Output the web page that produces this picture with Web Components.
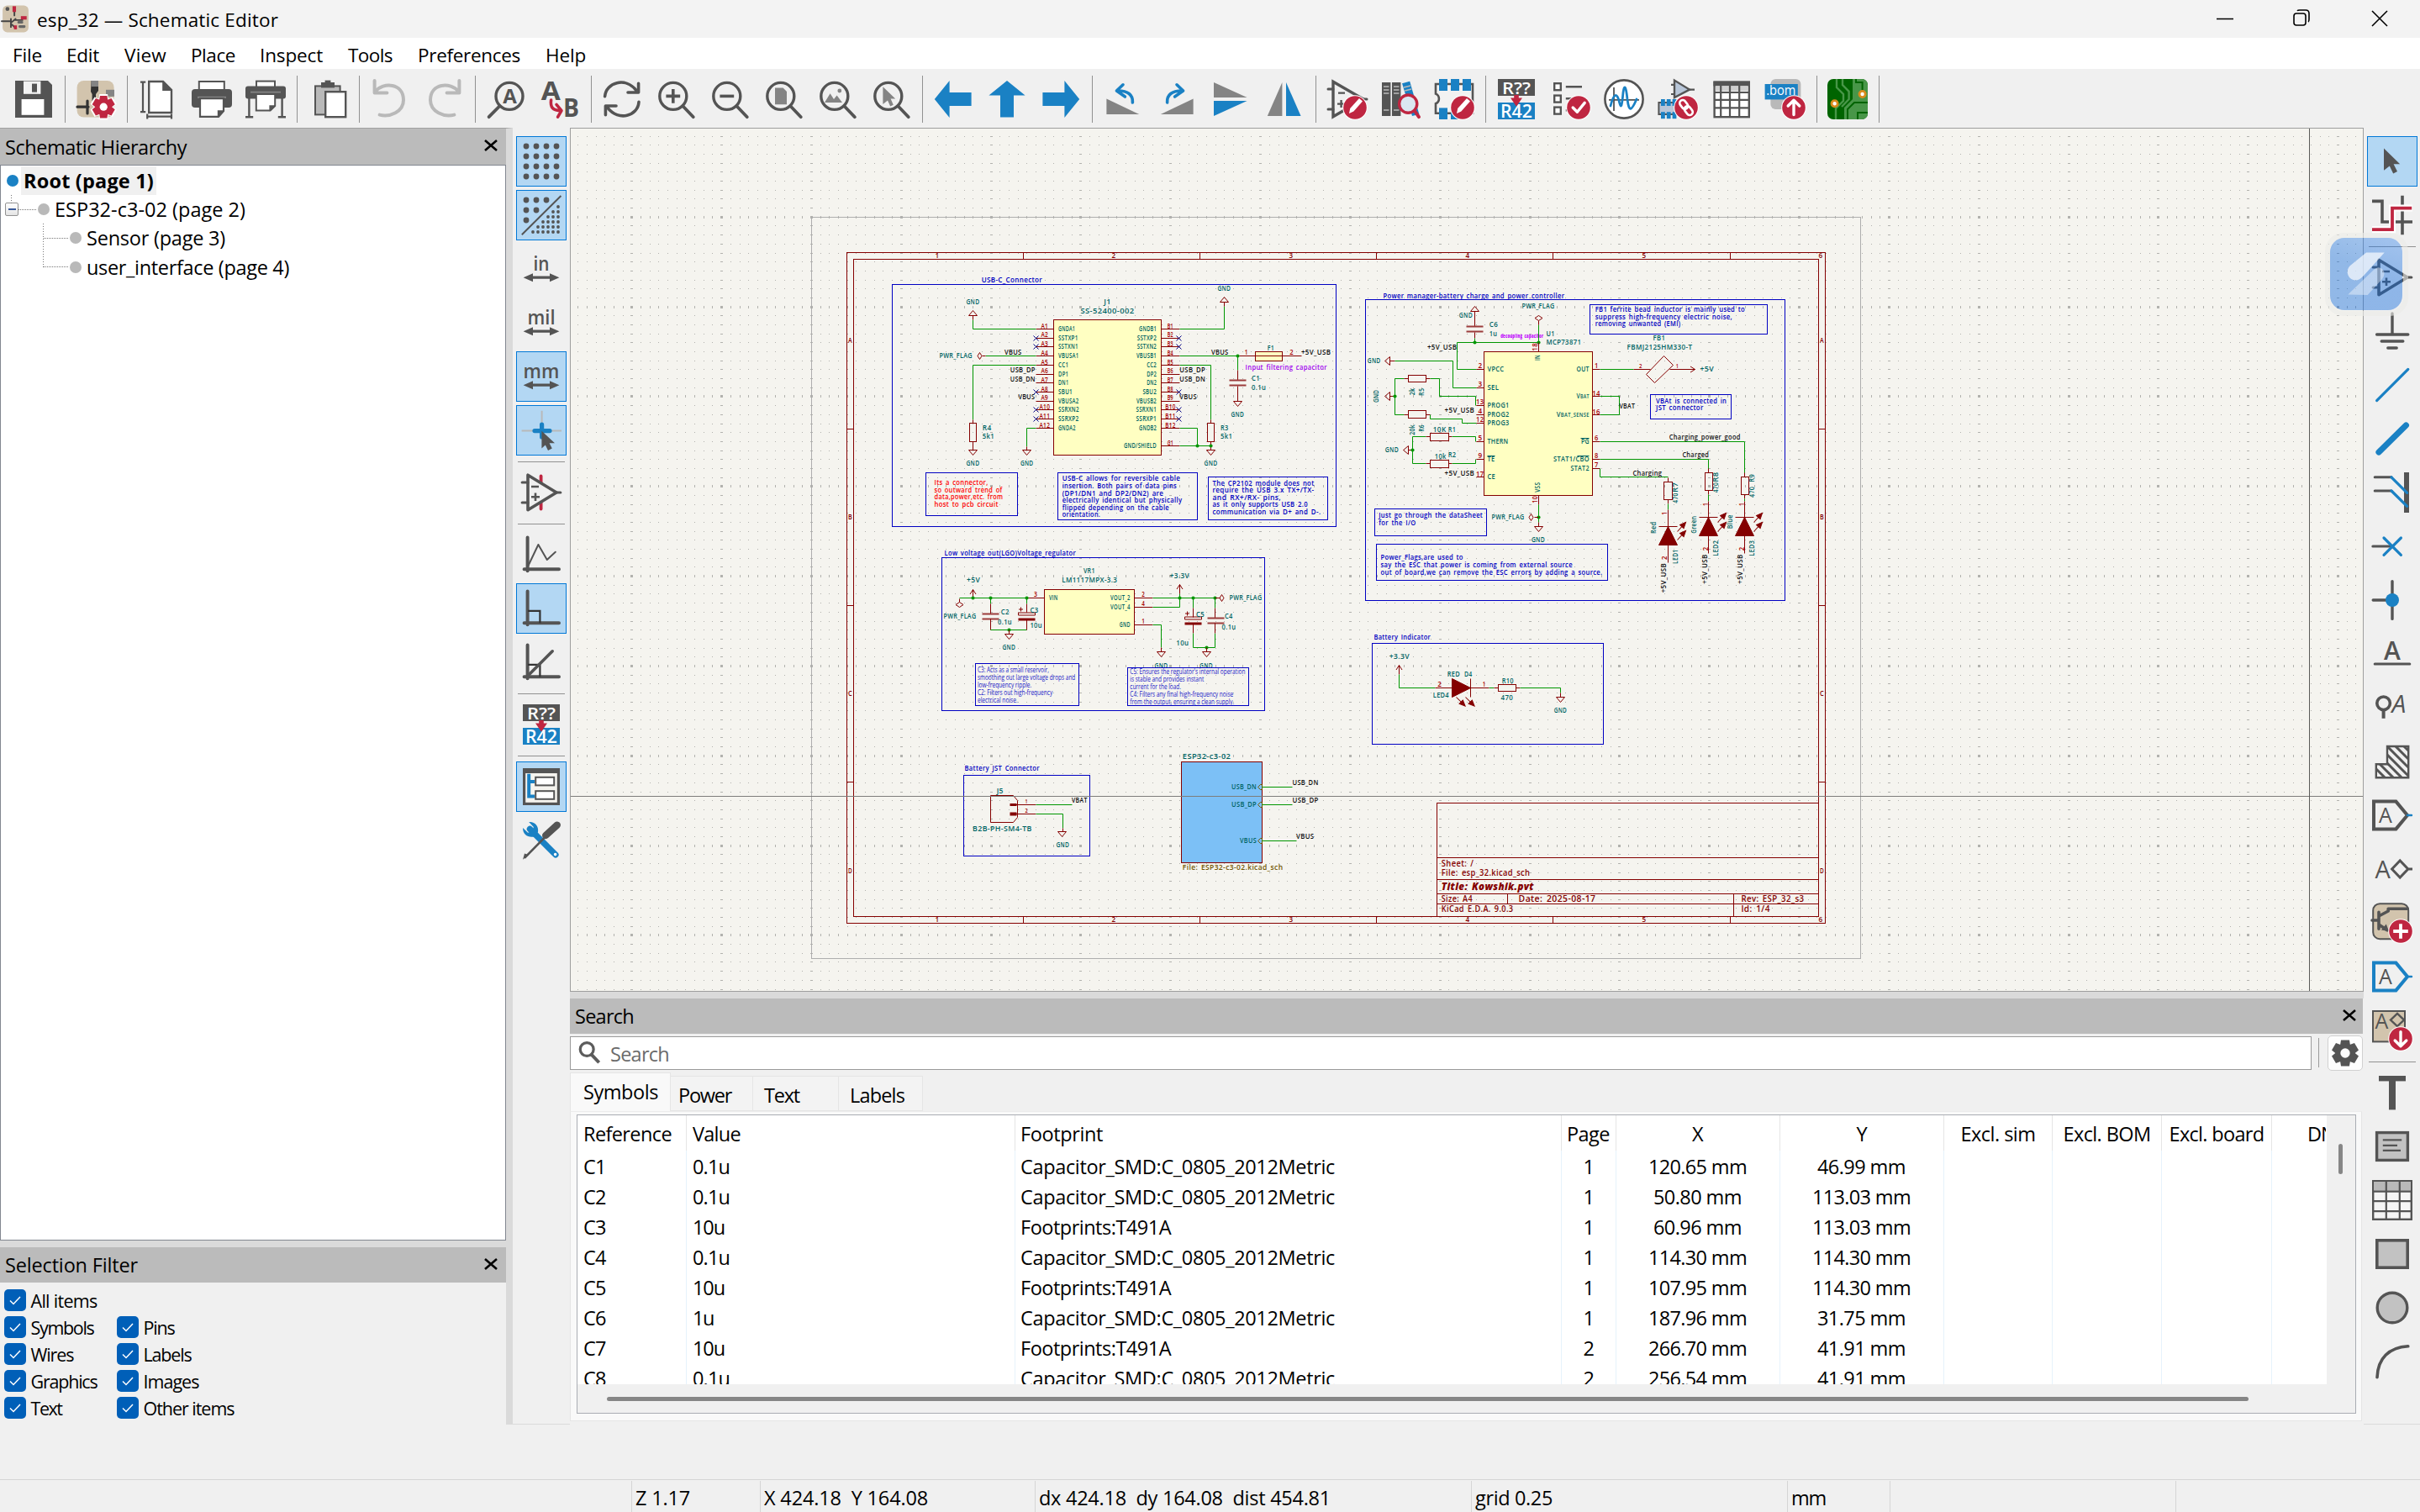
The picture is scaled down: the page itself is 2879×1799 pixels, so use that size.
<!DOCTYPE html>
<html lang="en">
<head>
<meta charset="utf-8">
<title>esp_32 — Schematic Editor</title>
<style>
html,body{margin:0;height:100%;overflow:hidden;background:#f0f0f0}
body{font-family:"Open Sans","Noto Sans",sans-serif;font-size:23.5px;color:#000}
</style>
</head>
<body>
<schematic-editor></schematic-editor>
<script>
const K='#545454',R='#bf2641',B='#1a81c4',G='#b9b9b9',M='#848484',T='#d2c4ad';
const ln=(d,c=K,w=1.5,x='')=>`<path d="${d}" fill="none" stroke="${c}" stroke-width="${w}" ${x}/>`;
const rl=(d,c=K,w=1.5)=>ln(d,c,w,'stroke-linecap="round" stroke-linejoin="round"');
const fl=(d,c=K,x='')=>`<path d="${d}" fill="${c}" ${x}/>`;
const rc=(x,y,w,h,f=K,s='none',sw=1,r=0)=>`<rect x="${x}" y="${y}" width="${w}" height="${h}" rx="${r}" fill="${f}" stroke="${s}" stroke-width="${sw}"/>`;
const ci=(x,y,r,f=K,s='none',sw=1)=>`<circle cx="${x}" cy="${y}" r="${r}" fill="${f}" stroke="${s}" stroke-width="${sw}"/>`;
const tx=(x,y,s,size,c=K,wt=700,w=0,st='')=>`<text x="${x}" y="${y}" font-size="${size}" fill="${c}" font-weight="${wt}" text-anchor="middle" ${w?`textLength="${w}" lengthAdjust="spacingAndGlyphs"`:''} style="${st}">${s}</text>`;
function gear(cx,cy,r,c,hole,hc){
  let s='';
  for(let i=0;i<6;i++)s+=`<path d="M${-r*.32} ${-r}H${r*.32}L${r*.48} 0H${-r*.48}Z" fill="${c}" transform="translate(${cx} ${cy}) rotate(${i*60})"/>`;
  return s+ci(cx,cy,r*.74,c)+ci(cx,cy,hole,hc);
}
const badge=(y=17)=>ci(17,y,7.4,'#fff')+ci(17,y,6.9,R);
const pencil=badge()+fl('M13.5 20.5l.6-3 5.4-6 2 1.7-5.3 6z','#fff');
const lens=(cx,hx)=>ci(cx,10.2,8,'#fff0',K,1.7)+rl(`M${hx>cx?cx+5.7:cx-5.7} 16L${hx} 22.6`,K,1.9);
const opamp=(x='')=>x+ln('M4 1.6V22.4L21 12Z',K,1.8,'stroke-linejoin="round"')+rl('M.6 6H4M.6 18H4M21 12H23.4',K,1.6)+ln('M6 8.5H10.5M6 14.6H11M8.5 12.3V17',K,1.3);
const annot=rc(1,0,22,10)+rc(1,14,22,10,B)+tx(12,8.8,'R??',10,'#fff',600,17)+tx(12,22.8,'R42',10.5,'#fff',600,19)+fl('M8.5 11.3H10.6V9.5H13.4V11.3H15.5L12 16.4Z',R);
const unit=(s,w)=>tx(12,12.8,s,11.5,K,600,w)+fl('M1.3 17.1L7 14.6V16.3H17V14.6L22.7 17.1 17 19.6V17.9H7V19.6Z');
const angle=rl('M3.8 1.8V21.6M1.8 20.6H22.5',K,2);
const glab=c=>ln('M1 3.8H14.2L21 12 14.2 20.2H1Z',c,2)+rl('M21 12H23.5',B,1.2)+tx(8,16.6,'A',12.5,K,500);
const cursor=fl('M7 4.2L16.6 13.6H12.8L15 18 12.6 19.2 10.4 14.8 7 17.4Z');
const ICONS={
save:fl('M1 1H20.5L23 3.5V23H1Z')+rc(6,1.3,10.2,7.6,'#f2f2f2')+rc(11,2.8,3,5)+rc(4.8,12,13.4,9.4,'#fff'),
setup:rc(.8,1,22,21.8,T,'none',1,4)+fl('M9.3 1H13.5V7L12 9V13H9.8V9L9 7.5Z','#333')+rc(9.3,1,4.2,3.5,M)+rc(18,6.4,5,4,M)+rl('M1 16.6H7.5M7 13V20.5',"#333",1.6)+gear(16.6,16.6,7.6,'#fff',1,'#fff')+gear(16.6,16.6,6.6,R,2.3,'#fff'),
page:fl('M6.6 1.5H15L20 6.5V20H6.6Z','#fff','stroke="'+K+'" stroke-width="1.2"')+fl('M14.6 1.2L20.3 7H14.6Z')+ln('M1.5 1.8H4.6M3 1.8V19.6M1.5 19.6H4.6M5.6 22.3H20M5.6 20.8V23.8M20 20.8V23.8',K,1.1),
print:rc(4.4,1.5,15,6,'#fff',K,1)+rc(0,6,24,11,K,'none',1,2)+ln('M3.5 10.9H20.5',M,1)+fl('M5 11.6H19V19L16 22.4H5Z','#fff','stroke="'+K+'" stroke-width="1.1"')+fl('M15.4 23V18.6H19.4Z'),
plot:rc(6.5,1.3,11,5,'#fff',K,1)+rc(0,4.2,24,7.6,K,'none',1,1.5)+ln('M2.2 11V22.6M21.8 11V22.6M0 22.6H4.6M19.4 22.6H24',K,1.2)+fl('M6.4 9H17.6V16L14.8 18.8H6.4Z','#fff','stroke="'+K+'" stroke-width="1"')+fl('M14.2 19.2V15.6H18Z')+ln('M3 7.8H21',M,.9),
paste:rc(4.5,4.2,14.8,17,G,K,1)+rc(8,2,8,3.2)+rc(10.3,.8,3.4,2)+rc(10.6,7.6,12,15,'#fff',K,1.2),
undo:rl('M2.8 1V8.3H10.2M3.2 7.5C8 1.5 20 2.4 20 12.5C20 19.5 12 22.8 5.8 21.3',G,2),
redo:rl('M21.2 1V8.3H13.8M20.8 7.5C16 1.5 4 2.4 4 12.5C4 19.5 12 22.8 18.2 21.3',G,2),
find:lens(14,1.8)+tx(14.3,14.4,'A',12,K,700),
replace:tx(6.6,12.6,'A',15.5,K,700,11.5)+tx(18.7,22.7,'B',15.2,K,700,9.5)+rl('M6.8 12.5C6.2 17 8 18.5 12 18.8M10 15.2L13 18.8 10.8 22.6',R,1.8),
refresh:rl('M1.8 10.3C2.5 2 14 -1.5 20.5 6.8M21.8 2.6V8H15.5M22 13.7C21.5 22 10 25.5 3.5 17.2M2.2 21.4V16H8.5',K,1.8),
zin:lens(10.4,22.4)+ln('M10.4 6V14.4M6.2 10.2H14.6',K,1.8),
zout:lens(10.4,22.4)+ln('M6.2 10.2H14.6',K,1.8),
zfit:lens(10.4,22.4)+fl('M7 5.3H11.8L14 7.5V15.1H7Z',M),
zobj:lens(10.4,22.4)+fl('M4.5 14L7.8 8.6 10 12 11.8 9.8 15 14Z',M)+ci(13.4,7,1.2,M),
zsel:lens(10.4,22.4)+fl('M7.2 4.6L14.6 11.8H11.8L13.4 15.4 11.6 16.2 10 12.8 7.2 15Z',M),
left:fl('M.9 12L9.8 1V8H22.8V16H9.8V23Z',B),
up:fl('M12 1L22.8 9.8H16V22.8H8V9.8H1.2Z',B),
right:fl('M23.1 12L14.2 1V8H1.2V16H14.2V23Z',B),
rotl:fl('M2.2 11.7L21.6 21H2.2Z',M)+rl('M17.7 14C18 9.5 15 6.8 8.4 7M12 3.4L8.2 7 13.2 10.5',B,1.8),
rotr:fl('M21.8 11.7L2.4 21H21.8Z',M)+rl('M6.3 14C6 9.5 9 6.8 15.6 7M12 3.4L15.8 7 10.8 10.5',B,1.8),
mirv:fl('M2 2L21.8 11H2Z',M)+fl('M2 13H21.8L2 22Z',B),
mirh:fl('M10.7 2V22H1.9Z',M)+fl('M13 2L21.8 22H13Z',B),
symed:ln('M4 1.6V22.4L22 12Z',K,1.7)+rl('M1 6H4M1 18H4M22 12H24',K,1.5)+ln('M7 8.3H11M6.5 14.8H11M8.8 12.5V17',K,1.2)+pencil,
lib:rc(1,2,5.2,20)+rc(7,2,5.2,20)+ln('M2 4.5H5.2M2 6.5H5.2M2 8.5H5.2M8 4.5H11.2M8 6.5H11.2M8 8.5H11.2M2 18.5H5.2M8 18.5H11.2',G,.8)+fl('M13 2.6L17.6 1.4 23.2 21 19 22Z',B)+ln('M14 5L18 4M14.6 7L18.6 6',G,.8)+ci(16.6,14.8,5.3,'#dbe7f1',R,1.7)+rl('M20.4 18.8L23 22.6',R,2),
fped:fl('M1 3H23V20.4H1V14.6C3.6 13.6 3.6 9.8 1 8.8Z','#f2f2f2','stroke="'+K+'" stroke-width="1.3"')+rc(3,0,5,7,B)+rc(10,0,5,7,B)+rc(17,0,5,7,B)+rc(3,17.2,5,6.8,B)+rc(10,17.2,5,6.8,B)+pencil,
annot,
erc:rc(2.6,2.6,3.8,4,'#fff',K,1.2)+rc(2.6,9.8,3.8,4,'#fff',K,1.2)+rc(2.6,16.8,3.8,4,'#fff',K,1.2)+ln('M9.4 4.6H19M9.4 11.6H14M9.4 18.6H12',K,1.2)+badge()+rl('M13.6 17L16.2 19.6 20.6 14.2','#fff',1.7),
sim:ci(12,12,11.3,'#fff',K,1.3)+ln('M3 12.4H21M6 5V19',K,.9)+rl('M4 16C6 8 8 8 9.3 14C10.3 18 10.8 16 11.5 8C12.2 3 13.2 4 14 12C15 20 16.5 19 19.5 12',B,1.4),
assign:fl('M10 .8V11L19 6.3Z','#b8c6d8','stroke="'+K+'" stroke-width="1.2"')+ln('M8 3.4H10M8 9H10M19 6.3H22',K,1.1)+rc(.7,14,10,7,'#b8c6d8',K,1)+rc(2,12,2.4,4,B)+rc(5.4,12,2.4,4,B)+rc(8.8,12,2.4,4,B)+rc(2,19.6,2.4,4,B)+rc(5.4,19.6,2.4,4,B)+rc(8.8,19.6,2.4,4,B)+badge()+`<g transform="rotate(-38 17 17)" fill="none" stroke="#fff" stroke-width="1.3"><rect x="15.2" y="11.8" width="3.600" height="5.800" rx="1.800"/><rect x="15.2" y="16.400" width="3.600" height="5.800" rx="1.800"/></g>`,
grid:rc(1.8,2,20.6,20.6,'#fff',K,1.2)+rc(1.2,1.2,21.8,3)+rc(2.4,4.2,19.4,3,'#cfcfcf')+ln('M2 8H22M2 12.4H22M2 17.2H22M5.6 4V22M11 4V22M16.6 4V22',K,1.1),
bom:rc(3.2,0,18,18,G,'none',1,3)+rc(-.2,3,19.6,9.2,B)+tx(9.4,9.7,'.bom',8.4,'#fff',500,17.6)+badge()+rl('M17 21.3V13M13.6 16L17 12.6 20.4 16','#fff',1.7),
pcb:'<clipPath id="c"><rect width="24" height="24" rx="3.5"/></clipPath><g clip-path="url(#c)">'+rc(0,0,24,24,'#006400')+fl('M10 24V17L15 12V0H24V24Z','#489648')+ln('M5.5 0V5L9.5 9V13L5 17.5V24M9 0V3.5L12.8 7.4V12L8.5 16.5',"#489648",1.2)+ln('M12 24V18L16 14H24M18 24V20H24','#006400',1)+ln('M20.8 9V2H17V0','#006400',1)+'</g>'+ci(20.8,9,1.8,'#fff','#d98b1c',1.4)+ci(4.3,14.6,1.8,'#fff','#d98b1c',1.4),
dots:[3,9,15,21].map(y=>[3,9,15,21].map(x=>ci(x,y,1.7)).join('')).join(''),
dots2:[[3,3],[9,3],[15,3],[3,9],[9,9],[3,15]].map(p=>ci(p[0],p[1],1.7)).join('')+ln('M.4 23.6L23.7 .5',K,1)+[0,1,2,3,4,5].map(i=>Array.from({length:6-i},(_,j)=>ci(22-3*j,22-3*i,.95)).join('')).join(''),
in:unit('in',9.5),mil:unit('mil',16.5),mm:unit('mm',21.4),
cross:ln('M12.3 .4V10M.3 12.3H24',G,1)+rl('M12.3 8.6V16M8 12.3H17',B,2.6)+fl('M12.2 12.4L20 19.6H16.8L18.4 22.8 16 24 14.4 20.8 12.2 22.8Z'),
hid:rl('M11.8 2.2V21.8',R,1.9)+fl('M4 2L20 12 4 22Z','#f0f0f0')+opamp(),
free:angle+rl('M4 19L10.2 6 15.4 15 20.4 10.4',K,1),
ortho:angle+ln('M4 13.4H11.2V20.6','#333',1.1),
diag:angle+ln('M4 13.4H11.2V20.6','#333',1.1)+rl('M4 20L18.6 5.4',K,1.8),
tree:rc(1.8,1.8,20.4,20.4,'#f5f4ef',K,1.6)+rc(1,1,22,3)+ln('M4.6 4.4V17.8H8M4.6 9H8',B,2)+rc(8.6,6.4,11,4.8,'#fff',K,1)+rc(8.6,14.6,11,4.8,'#fff',K,1),
tools:ln('M5.2 5.2L20.5 20.5',B,3.6,'stroke-linecap="round"')+fl('M1 4.5C1 9 4.5 10.6 8.2 9.6L10 7C10.6 3.4 8 .6 4.6 1L7.4 4 6.6 6.6 4 7.4Z',B)+ci(20.3,20.3,.9,'#fff')+ln('M2 22.4L15 9.2',K,1.3)+fl('M1 23.4L2 19.8 4.4 20.6Z')+ln('M14.6 9L21.4 2.8',K,4.2,'stroke-linecap="round"'),
sel:cursor,
hl:ln('M0 3.7H6V16H24M18 .4V23.6',K,1.8)+ln('M0 20.6H12V7.8H24','#fff',4)+ln('M0 20.6H12V7.8H23.6',R,1.9),
amp:opamp(),
gnd:rl('M12 1.5V14M2.8 14H21.4M5.6 18H18.4M9.4 22H14.6',K,1.7),
wire:rl('M2.8 21.3L21.4 2.7',B,1.6),
bus:rl('M4 20L20.2 4',B,3.6),
entry:rl('M1.6 2.9H11.5M1.6 11H11.5',K,1.5)+rc(19,0,3,24)+rl('M11.5 2.9L20.8 12.2M11.5 11L20.8 20.2',B,1.6),
nc:rl('M.4 12H12',K,1.5)+rl('M7 7L17.2 17.2M17.2 7L7 17.2',B,1.6),
junc:rl('M12 .8V23.2M.6 12H12',K,1.7)+ci(12,12,4,B),
label:tx(12,15.4,'A',15,K,600)+rl('M1.6 18H22.4',K,1.5),
dir:ci(6.8,9.4,3.9,'none',K,1.8)+ln('M6.8 13V18.4',K,2)+tx(16,15,'A',15,K,500,0,'font-style:italic'),
rule:'<clipPath id="h"><path d="M9 3H22V22H2V14H9Z"/></clipPath><g clip-path="url(#h)">'+ln([-17,-12,-7,-2,3,8,13,18].map(a=>`M${a} 2L${a+21} 23`).join(''),K,1.5)+'</g>'+ln('M9 3H21.6V21.6H2.4V13.6H9Z',K,1.2),
glab:glab(K),glabb:glab(B),
hlab:tx(6.3,17.6,'A',14.5,K,500)+ln('M11.8 12L16.6 7 21.4 12 16.6 17ZM21.4 12H24',K,1.5),
sheet:rc(.6,.6,21,21,T,K,1,4)+rl('M0 10.5H4M4 5.6V15.6M4 8L9.6 5V3.6H21M4 13L9 16.4',K,1.8)+fl('M10 17l-4.6-.8 3-3.4z')+badge()+ln('M17 12.6V21.4M12.6 17H21.4','#fff',1.9),
imp:rc(.5,.5,19,18.2,T,K,1)+tx(5.7,10.8,'A',12.5,K,500)+ln('M11 5.8L15 2 19 5.8 15 9.6Z',K,1.2)+badge()+rl('M17 12.8V21M13.6 18L17 21.4 20.4 18','#fff',1.7),
text:rc(4,2,16,3.2)+rc(10,2,4,20.2),
tbox:rc(2.8,3.8,18.4,16.4,'#c2c2c2',K,1.7)+ln('M6.4 8.2H17.6M6.4 11.4H15M6.4 14.4H17',K,1.1),
table:rc(.6,.6,22.8,22.8,'#f5f5f5',K,1.2)+rc(1,1,22,5.4,G)+ln('M.6 6.8H23.4M.6 12.6H23.4M.6 18.6H23.4M8.4 .6V23.4M16.4 .6V23.4',K,1.1),
rect:rc(2.9,3.9,18.2,16.2,'#c2c2c2',K,1.8),
circ:ci(12,12,8.9,'#c2c2c2',K,1.7),
arc:rl('M3 21.4C3.4 10 10 3.6 21.4 2.9',K,1.8),
gear:gear(12,12,11,K,4,'#fdfdfd'),
mag:ci(9.6,9,6.8,'none','#5c5c5c',2.8)+ln('M14 14L22 22.5','#5c5c5c',3.4),
logo:rc(.8,.4,22.4,23.2,T,'none',1,4)+rl('M11 5V9M11 13H18M0 14H7M8 12V19M8.5 15L12 12M9 17L12 20',"#444",1.4)+rc(9.4,1,3,5,R)+rc(16.6,9.6,5,3,R)+rc(10.6,17.6,2.6,3.4,R)+rc(13.6,13.8,5,2.2,'#666',"none",1,1)+rc(14.6,17.4,6,2.4,'#666',"none",1,1)+ci(5,3.4,1.7,'#555'),
};
function define(name,html,init){
  customElements.define(name,class extends HTMLElement{
    constructor(){super();this.attachShadow({mode:'open'})}
    connectedCallback(){this.shadowRoot.innerHTML=typeof html=='function'?html(this):html;if(init)init(this)}
  });
}
/* Text run whose tracking is set so that it takes the width in "w". */
define('ui-text','<style>:host{display:inline-block;white-space:pre;flex:none}</style><slot></slot>',el=>{
  const w=+el.getAttribute('w');if(!w)return;
  const n=el.textContent.length,now=el.getBoundingClientRect().width;
  if(now)el.style.letterSpacing=((w-now)/n).toFixed(3)+'px';
});
define('ui-icon',el=>{const s=el.getAttribute('size')||48;return `<style>:host{display:block;width:${s}px;height:${s}px;flex:none}svg{display:block;overflow:visible;font-family:"Open Sans",sans-serif}</style><svg width="${s}" height="${s}" viewBox="0 0 24 24">${ICONS[el.getAttribute('name')]}</svg>`});
define('tool-button',el=>`<style>:host{display:flex;width:64px;height:64px;align-items:center;justify-content:center;flex:none;box-sizing:border-box}
div{width:60px;height:60px;box-sizing:border-box;display:flex;align-items:center;justify-content:center}
:host([on]) div{background:#b3d7f3;border:1px solid #0078d7}</style><div><ui-icon name="${el.getAttribute('icon')}"></ui-icon></div>`);
define('tool-sep',`<style>:host{display:flex;width:10px;height:56px;justify-content:center;flex:none}i{width:1px;height:100%;background:#919191}
:host([h]){width:56px;height:10px;align-items:center}:host([h]) i{width:100%;height:1px}</style><i></i>`);
define('pane-caption',`<style>:host{display:flex;height:42px;background:#bbb;align-items:center;justify-content:space-between;padding:0 10px 0 6px;box-sizing:border-box;flex:none}:host([flush]){padding-right:8px}svg{display:block;margin:-3px 0 0}</style><slot></slot><svg width="16" height="14" viewBox="0 0 16 14"><path d="M1 1L15 13M15 1L1 13" stroke="#000" stroke-width="2.6"/></svg>`);
const tools=(s,h)=>s.split(' ').map(n=>n=='|'?`<tool-sep ${h||''}></tool-sep>`:`<tool-button icon="${n.replace('*','')}" ${n.endsWith('*')?'on':''}></tool-button>`).join('');
define('title-bar',`<style>:host{display:flex;height:45px;background:#f3f3f3;align-items:center;padding-left:2px;font-size:22.5px}ui-text{margin:2px 0 0 9px}svg{margin-left:auto;display:block}</style>
<ui-icon name="logo" size="33"></ui-icon><ui-text w="287">esp_32 — Schematic Editor</ui-text>
<svg width="260" height="45" fill="none" stroke="#000" stroke-width="1.6"><path d="M18 22.5H38M203 13L221 31M221 13L203 31"/><rect x="110" y="16" width="14" height="14" rx="3"/><path d="M114 13Q114.500 12 117 12H124Q128 12 128 16V23Q128 25.500 127 26"/></svg>`);
define('menu-bar','<style>:host{display:flex;height:37px;background:#fff;padding-left:15px;align-items:center;font-size:22.5px}ui-text{margin-top:3px}</style>'+[['File',35,29],['Edit',39,30],['View',50,29],['Place',53,29],['Inspect',75,30],['Tools',53,30],['Preferences',122,30],['Help',48,0]].map(a=>`<ui-text w="${a[1]}" style="margin-right:${a[2]}px">${a[0]}</ui-text>`).join(''));
define('main-toolbar','<style>:host{display:flex;height:70px;align-items:center;padding:2px 0 0 8px;box-sizing:border-box;background:#f0f0f0}</style>'+tools('save | setup | page print plot | paste | undo redo | find replace | refresh zin zout zfit zobj zsel | left up right | rotl rotr mirv mirh | symed lib fped | annot erc sim assign grid bom | pcb |'));
define('side-toolbar',el=>`<style>:host{display:flex;flex-direction:column;align-items:center;padding-top:8px;box-sizing:border-box;background:#f0f0f0;border-bottom:1px solid #dadada;height:1543px}</style>`+tools(el.getAttribute('tools'),'h'));
define('tree-row',el=>{const l=+el.getAttribute('level');return `<style>:host{display:flex;height:34.2px;align-items:center;box-sizing:border-box;padding-left:${[7,5,44][l]}px}
.d{width:14px;height:14px;border-radius:7px;background:${l?'#b9b9b9':B};flex:none}.t{display:flex;align-items:center;height:34px;padding:0 3px;margin-left:3px;${l?'':'background:#f0f0f0;font-weight:700'}}
.e{width:16px;height:16px;box-sizing:border-box;border:1.500px solid #919191;border-radius:2px;background:linear-gradient(#fff,#e4e4e4);display:flex;align-items:center;justify-content:center}.e i{width:9px;height:2px;background:#3b5a9a}
.g{height:0;border-top:1px dotted #777}</style>${l==1?'<span class="e"><i></i></span><i class="g" style="width:21px;margin-right:2px"></i>':l==2?'<i class="g" style="width:29px;margin-right:2px;margin-left:7px"></i>':''}<i class="d"></i><span class="t"><slot></slot></span>`});
define('hierarchy-tree',`<style>:host{display:block;box-sizing:border-box;height:1280px;border:1.500px solid #828790;background:#fff;width:602px;flex:none;padding-top:1px}.l{position:relative}svg{position:absolute;left:0;top:0}</style><div class="l"><svg width="60" height="140" fill="none" stroke="#777" stroke-dasharray="1 2"><path d="M12.500 34V44M50.500 68V120"/></svg>
<tree-row level="0"><ui-text w="155">Root (page 1)</ui-text></tree-row><tree-row level="1"><ui-text w="227">ESP32-c3-02 (page 2)</ui-text></tree-row><tree-row level="2"><ui-text w="165">Sensor (page 3)</ui-text></tree-row><tree-row level="2"><ui-text w="241">user_interface (page 4)</ui-text></tree-row></div>`);
define('check-item',`<style>:host{display:flex;align-items:center;height:32px;font-size:21.5px;gap:5.5px}svg{display:block;flex:none}::slotted(*){margin-top:1px}</style><svg width="26" height="26"><rect width="26" height="26" rx="5" fill="#005fb8"/><path d="M7 13.500L11 17.500 19 9" fill="none" stroke="#fff" stroke-width="1.500"/></svg><slot></slot>`);
define('selection-filter',`<style>:host{display:grid;grid-template-columns:134px 300px;grid-auto-rows:32px;padding:5px 0 0 5px;height:169px;box-sizing:border-box}</style>`+[['All items',79],0,['Symbols',75],['Pins',37],['Wires',51],['Labels',57],['Graphics',79],['Images',66],['Text',37],['Other items',108]].map(a=>a?`<check-item><ui-text w="${a[1]}">${a[0]}</ui-text></check-item>`:'<span></span>').join(''));
define('search-tabs',`<style>:host{display:flex;height:46px;align-items:flex-end;margin-top:3px}span{box-sizing:border-box;height:42px;background:#f3f3f3;border:1px solid #e5e5e5;border-left:0;display:flex;align-items:center;padding-left:9px}span.a{height:46px;background:#f9f9f9;border-bottom:0;border-left:1px solid #e5e5e5;padding:0 0 4px 15px}ui-text{margin-top:3px}.a ui-text{margin-top:3px}</style>
<span class="a" style="width:120px"><ui-text w="89">Symbols</ui-text></span><span style="width:98px"><ui-text w="63">Power</ui-text></span><span style="width:102px;padding-left:13px"><ui-text w="42">Text</ui-text></span><span style="width:100px;padding-left:13px"><ui-text w="65">Labels</ui-text></span>`);
const COLS=[130,391,650,65,195,195,129,130,131,64];
const HEAD=[['Reference',105],['Value',57],['Footprint',98],['Page',51],['X',14],['Y',13],['Excl. sim',89],['Excl. BOM',104],['Excl. board',113],['DNP',46]];
const CAP='Capacitor_SMD:C_0805_2012Metric',FT='Footprints:T491A';
const ROWS=[['C1','0.1u',CAP,'1','120.65 mm','46.99 mm'],['C2','0.1u',CAP,'1','50.80 mm','113.03 mm'],['C3','10u',FT,'1','60.96 mm','113.03 mm'],['C4','0.1u',CAP,'1','114.30 mm','114.30 mm'],['C5','10u',FT,'1','107.95 mm','114.30 mm'],['C6','1u',CAP,'1','187.96 mm','31.75 mm'],['C7','10u',FT,'2','266.70 mm','41.91 mm'],['C8','0.1u',CAP,'2','256.54 mm','41.91 mm']];
const cellW=s=>({[CAP]:374,[FT]:179,'0.1u':44,'10u':38,'1u':25}[s]||(s[0]=='C'?26.5:s.endsWith('mm')?(s.length==9?117:105):12));
define('symbol-table',`<style>:host{display:grid;grid-template-columns:2081px 34px;grid-template-rows:320px 34px;box-sizing:border-box;border:1px solid #a9acb3;width:2117px;height:356px;background:#fff;overflow:hidden}
.b{height:320px;overflow:hidden}.r{display:flex;height:36px}.h{height:42px}.c{box-sizing:border-box;border-right:1px solid #e6f2fb;display:flex;align-items:center;justify-content:center;flex:none;overflow:hidden;padding-right:1px;padding-top:1px}
.h .c{border-color:#e5e5e5;padding-top:2px}.c:nth-child(-n+3){justify-content:flex-start;padding-left:7px}.c:nth-child(3){padding-left:6px}.c:nth-child(10){justify-content:flex-start;padding-left:42px;border:0}.h .c:nth-child(n+5){padding-right:0}
.v{background:#f0f0f0;grid-row:1/3;grid-column:2;display:flex;justify-content:center;padding-top:34px}.v i{width:5px;height:36px;border-radius:3px;background:#868686;margin-right:2px}
.s{background:#f0f0f0;padding:15px 0 0 35px}.s i{display:block;height:5px;width:1953px;border-radius:3px;background:#868686}</style>
<div class="b"><div class="r h">${HEAD.map((h,i)=>`<div class="c" style="width:${COLS[i]}px"><ui-text w="${h[1]}">${h[0]}</ui-text></div>`).join('')}</div>
${ROWS.map(r=>`<div class="r">${COLS.map((w,i)=>`<div class="c" style="width:${w}px">${r[i]?`<ui-text w="${cellW(r[i])}">${r[i]}</ui-text>`:''}</div>`).join('')}</div>`).join('')}</div><div class="s"><i></i></div><div class="v"><i></i></div>`);
define('search-pane',`<style>:host{display:block;width:2133px}.f{display:flex;height:43px;align-items:flex-end;box-sizing:border-box}.i{width:2072px;height:40px;box-sizing:border-box;border:1px solid #9a9a9a;background:#fff;display:flex;align-items:center;padding-left:8px;gap:11px;color:#6b6b6b}.i ui-text{margin-top:2px}.i ui-icon{margin-top:-2px}
.v{width:1px;height:35px;background:#9a9a9a;margin:0 10px 3px 8px}.g{width:42px;height:42px;margin-bottom:-1px;box-sizing:border-box;background:#fdfdfd;border:1px solid #d0d0d0;border-radius:5px;display:flex;align-items:center;justify-content:center}
.p{background:#f9f9f9;border:1px solid #e5e5e5;border-top-color:#ececec;box-sizing:border-box;width:2132px;height:369px;padding:3px 0 0 7px}</style>
<pane-caption flush><ui-text w="70">Search</ui-text></pane-caption><div class="f"><div class="i"><ui-icon name="mag" size="28"></ui-icon><ui-text w="70">Search</ui-text></div><i class="v"></i><div class="g"><ui-icon name="gear" size="34"></ui-icon></div></div><search-tabs></search-tabs><div class="p"><symbol-table></symbol-table></div>`);
define('status-bar','<style>:host{display:flex;height:39px;border-top:1px solid #d5d5d5;box-sizing:border-box;padding-left:751px}span{box-sizing:border-box;border-left:1px solid #d5d5d5;padding:4px 0 0 4px;margin-top:1px}ui-text{line-height:30px}</style>'+[['Z 1.17',153,65],['X 424.18  Y 164.08',327,195],['dx 424.18  dy 164.08  dist 454.81',519,347],['grid 0.25',376,92],['mm',122,41],['',340,0],['',291,0]].map(a=>`<span style="width:${a[1]}px">${a[0]?`<ui-text w="${a[2]}">${a[0]}</ui-text>`:''}</span>`).join(''));

/* Schematic drawing: each block is plotted in its own local units [x0, y0, units/px x, units/px y]. */
const GR='#009600',MR='#840000',TL='#006464',PN='#a90000',BL='#0000c2',BK='#0f0f0f';
function pen(x0,y0,sx,sy,out){
  const X=x=>x0+x/sx,Y=y=>y0+y/sy,hx=x=>Math.round(X(x)-.5)+.5,hy=y=>Math.round(Y(y)-.5)+.5;
  const fz=s=>(s<9.5?s*1.06:s).toFixed(2);
  const o={
    l(c,...p){let d='';for(let i=0;i<p.length;i+=2)d+=(i?'L':'M')+hx(p[i])+' '+hy(p[i+1]);out.push(`<path d="${d}" fill="none" stroke="${c}"/>`)},
    r(c,a,b,e,f,fill='none'){out.push(`<rect x="${hx(a)}" y="${hy(b)}" width="${hx(e)-hx(a)}" height="${hy(f)-hy(b)}" fill="${fill}" stroke="${c}"/>`)},
    t(a,b,y,s,c=TL,fs=8.6,x=''){out.push(`<text x="${X(a).toFixed(1)}" y="${Y(y).toFixed(1)}" font-size="${fz(fs)}" fill="${c}" textLength="${((b-a)/sx).toFixed(1)}" lengthAdjust="spacingAndGlyphs" ${x}>${s}</text>`)},
    v(x,yb,yt,s,c=TL,fs=8.6){out.push(`<text transform="translate(${X(x).toFixed(1)} ${Y(yb).toFixed(1)}) rotate(-90)" font-size="${fz(fs)}" fill="${c}" textLength="${((yb-yt)/sy).toFixed(1)}" lengthAdjust="spacingAndGlyphs">${s}</text>`)},
    raw(x,y,s){out.push(`<g transform="translate(${hx(x)} ${hy(y)})" fill="none" stroke="${MR}">${s}</g>`)},
    g(x,y,a=0){o.raw(x,y,`<path transform="rotate(${a})" d="M-5 0H5L0 6Z"/>`)},
    arr(x,y,a=0){o.raw(x,y,`<path transform="rotate(${a})" d="M-3.500 5.500L0 0L3.500 5.500M0 0V11"/>`)},
    fl(x,y){o.raw(x,y,'<path d="M-2.500 0L0 -4L2.500 0L0 4Z"/>')},
    fh(x,y){o.raw(x,y,'<path d="M-4.500 0L0 -3L4.500 0L0 3Z"/>')},
    j(x,y){out.push(`<circle cx="${hx(x)}" cy="${hy(y)}" r="2.100" fill="${GR}"/>`)},
    nc(x,y){out.push(`<path d="M${hx(x)-3} ${hy(y)-3}l6 6m0-6l-6 6" stroke="#000084" fill="none"/>`)},
    cap(x,y){o.raw(x,y,'<path stroke-width="2" stroke="#9c3c3c" d="M-10 -3H10M-10 3H10"/>')},
    pcap(x,y){o.raw(x,y,`<path d="M-10 -4.500H10V-1.500H-10Z"/><path stroke-width="3" d="M-10 3.500H10"/><path d="M-7 -11V-6M-9.500 -8.500H-4.500"/>`)},
    led(x,y,a=0){o.raw(x,y,`<g transform="rotate(${a})"><path fill="${MR}" d="M0 -11L11 11H-11Z"/><path d="M-11 -11H11"/></g>`)},
    ray(x,y,a){o.raw(x,y,`<g transform="rotate(${a})"><path d="M0 0V-13"/><path fill="${MR}" d="M-3 -8L0 -15L3 -8Z"/></g>`)},
    note(a,lines,y,dy,c=BL,fs=8.8,x){lines.forEach((l,i)=>o.t(a,l[1],y+i*dy,l[0],c,fs,x))}
  };
  return o;
}
function drawing(){
  const out=[];
  let d='';
  for(let i=-26;i<174;i++){const x=965+10.683*i;if(x<681||x>2809)continue;const mx=i%10==0;
    for(let k=-9;k<87;k++){const y=257.8+10.683*k;if(y<155||y>1177)continue;const my=k%10==0,w=mx?3:1,h=my?3:1;
      d+=`M${Math.round(x)-(mx?1:0)} ${Math.round(y)-(my?1:0)}h${w}v${h}h-${w}z`}}
  out.push(`<path d="${d}" fill="#b2b2ae" shape-rendering="crispEdges"/>`);
  out.push('<rect x="965.500" y="258.500" width="1248" height="882" fill="none" stroke="#aeaeae"/>');
  const f=pen(0,0,1,1,out);
  f.r(MR,1007,300,2171,1098);f.r(MR,1015,308,2163,1090);
  [1217,1427,1637,1847,2058].forEach(x=>{f.l(MR,x,300,x,308);f.l(MR,x,1090,x,1098)});
  [510,720,930].forEach(y=>{f.l(MR,1007,y,1015,y);f.l(MR,2163,y,2171,y)});
  [1115,1325,1536,1746,1956,2166].forEach((x,i)=>{f.t(x-2.5,x+2.5,307,i+1,MR,8);f.t(x-2.5,x+2.5,1097,i+1,MR,8)});
  [405,615,825,1036].forEach((y,i)=>{f.t(1009,1014,y+3,'ABCD'[i],MR,8);f.t(2165,2170,y+3,'ABCD'[i],MR,8)});

  const a=pen(1000,290,2.529,3,out);
  a.r(BL,155,145,1491,1009);a.r(BL,256,817,533,970);a.r(BL,653,817,1074,985);a.r(BL,1106,832,1466,985);
  a.t(424,607,139,'USB-C_Connector',BL,9);
  a.r(MR,640,271,966,754,'#ffffc2');
  a.t(792,814,217,'J1');a.t(722,884,248,'SS-52400-002');
  const ys=[304,336,368,400,433,465,496,529,561,593,625,658];
  [['GNDA1',706],['SSTXP1',715],['SSTXN1',715],['VBUSA1',717],['CC1',686],['DP1',686],['DN1',686],['SBU1',698],['VBUSA2',717],['SSRXN2',718],['SSRXP2',717],['GNDA2',707]].forEach((p,i)=>{a.l(MR,588,ys[i],640,ys[i]);a.t(655,p[1],ys[i]+8,p[0],TL,7.6);a.t(i>8?598:603,i>8?630:625,ys[i]-2,'A'+(i+1),PN,7.6)});
  [['GNDB1',898],['SSTXP2',892],['SSTXN2',892],['VBUSB1',890],['CC2',921],['DP2',921],['DN2',921],['SBU2',909],['VBUSB2',890],['SSRXN1',889],['SSRXP1',889],['GNDB2',898]].forEach((p,i)=>{a.l(MR,966,ys[i],1021,ys[i]);a.t(p[1],951,ys[i]+8,p[0],TL,7.6);a.t(i>8?977:983,i>8?1008:1001,ys[i]-2,'B'+(i+1),PN,7.6)});
  a.l(MR,966,721,1021,721);a.t(852,951,729,'GND/SHIELD',TL,7.6);a.t(983,1001,719,'G1',PN,7.6);
  [336,368,529,593,625].forEach(y=>{a.nc(587,y);a.nc(1019,y)});
  a.l(GR,588,304,398,304,398,270);a.l(MR,398,270,398,257);a.g(398,257,180);a.t(378,418,216,'GND');
  a.l(GR,588,400,437,400);a.l(MR,437,400,425,400);a.fl(418,400);a.t(297,397,409,'PWR_FLAG');a.t(493,545,395,'VBUS',BK);
  a.l(GR,588,433,398,433,398,627);a.l(MR,398,627,398,640);a.r(MR,388,640,408,706);a.l(MR,398,706,398,736);a.g(398,736);a.t(378,418,793,'GND');a.t(427,454,665,'R4');a.t(427,463,697,'5k1');
  a.t(510,586,458,'USB_DP',BK);a.t(510,586,491,'USB_DN',BK);a.t(535,585,554,'VBUS',BK);
  a.l(GR,588,658,560,658,560,724);a.l(MR,560,724,560,736);a.g(560,736);a.t(541,580,793,'GND');
  a.l(GR,1021,304,1154,304,1154,222);a.l(MR,1154,222,1154,208);a.g(1154,208,180);a.t(1134,1174,168,'GND');
  a.l(GR,1021,400,1195,400);a.l(GR,1195,400,1195,450);a.l(MR,1195,450,1195,487);a.cap(1195,496);a.l(MR,1195,508,1195,562);a.g(1195,562);a.j(1195,400);
  a.l(MR,1200,400,1247,400);a.r(MR,1247,385,1329,418,'#ffffc2');a.l(MR,1247,400,1386,400);a.t(1115,1167,395,'VBUS',BK);a.t(1216,1226,397,'1',PN,9);a.t(1351,1363,397,'2',PN,9);a.t(1284,1305,380,'F1');a.t(1386,1475,395,'+5V_USB',BK);
  a.t(1218,1464,451,'Input filtering capacitor','#a000f0',8.8);a.t(1237,1262,489,'C1');a.t(1237,1280,521,'0.1u');a.t(1175,1214,617,'GND');
  a.t(1020,1098,458,'USB_DP',BK);a.t(1020,1098,491,'USB_DN',BK);a.t(1020,1072,554,'VBUS',BK);
  a.l(GR,1021,433,1114,433,1114,627);a.l(MR,1114,627,1114,640);a.r(MR,1104,640,1124,706);a.l(MR,1114,706,1114,736);a.g(1114,736);a.t(1094,1134,793,'GND');a.t(1143,1167,665,'R3');a.t(1143,1179,697,'5k1');
  a.l(GR,1021,658,1073,658,1073,721);a.l(GR,1021,721,1114,721);a.j(1073,721);a.j(1114,721);
  a.note(282,[['Its a connector,',444],['so outward trend of',487],['data,power,etc. from',489],['host to pcb circuit',475]],861,25.8,'#f00');
  a.note(667,[['USB-C allows for reversible cable',1022],['insertion. Both pairs of data pins',1012],['(DP1/DN1 and DP2/DN2) are',972],['electrically identical but physically',1028],['flipped depending on the cable',989],['orientation.',782]],847,25.7);
  a.note(1119,[['The CP2102 module does not',1425],['require the USB 3.x TX+/TX-',1425],['and RX+/RX- pins,',1325],['as it only supports USB 2.0',1406],['communication via D+ and D-.',1445]],863,25.7);

  const b=pen(1600,290,2.6133,3,out);
  b.r(BL,64,199,1368,1273);b.t(119,683,194,'Power manager-battery charge and power controller',BL,9);
  b.r(BL,761,217,1314,322);b.r(BL,950,538,1201,625);b.r(BL,92,946,441,1042);b.r(BL,98,1072,817,1201);
  b.note(778,[['FB1 ferrite bead inductor is mainly used to',1244],['suppress high-frequency electric noise,',1205],['removing unwanted (EMI)',1044]],243,25.7);
  b.note(967,[['VBAt is connected in',1187],['JST connector',1115]],569,26);
  b.note(105,[['Just go through the dataSheet',429],['for the I/O',221]],979,25.7);
  b.note(111,[['Power_Flags,are used to',368],['say the ESC that power is coming from external source',708],['out of board,we can remove the ESC errors by adding a source.',801]],1129,26);
  b.r(MR,432,385,770,898,'#ffffc2');
  b.t(626,653,329,'U1');b.t(626,735,361,'MCP73871');
  b.t(355,397,265,'GND');b.g(405,241,180);b.l(MR,405,241,405,294);b.cap(405,304);b.l(MR,405,317,405,336);b.l(GR,405,336,405,352);b.t(449,476,296,'C6');b.t(449,474,329,'1u');b.t(484,617,335,'decoupling capacitor','#c000ff',6,'font-weight="800"');
  b.l(GR,408,448,349,448,349,352,602,352,602,288);b.l(MR,602,288,602,273);b.fh(602,264);b.j(405,352);b.j(602,352);b.l(MR,602,352,602,385);b.t(550,652,232,'PWR_FLAG');b.v(598,383,353,'18',PN,8.4);b.v(607,417,396,'IN');
  b.t(256,348,379,'+5V_USB',BK);
  [[448,'2','VPCC',495],[514,'3','SEL',479],[577,'13','PROG1',511],[610,'4','PROG2',511],[640,'12','PROG3',511],[706,'5','THERN',508],[769,'9','TE',466],[833,'17','CE',468]].forEach(p=>{b.l(MR,408,p[0],432,p[0]);p[1].length>1?b.t(408,432,p[0]-3,p[1],PN,8.6):b.t(414,427,p[0]-3,p[1],PN,8.6);b.t(443,p[3],p[0]+8,p[2])});
  b.l(TL,443,757,466,757);
  [[448,'1','OUT',720],[544,'14','VBAT',720],[610,'16','VBAT_SENSE',658],[706,'6','PG',734],[769,'8','STAT1/CBO',648],[802,'7','STAT2',702]].forEach(p=>{b.l(MR,770,p[0],794,p[0]);p[1].length>1?b.t(769,794,p[0]-2,p[1],PN,8.6):b.t(776,788,p[0]-3,p[1],PN,8.6);const q=p[2].replace(/^VBAT/,'V<tspan font-size="7">BAT</tspan>').replace('_SENSE','<tspan font-size="7">_SENSE</tspan>');b.t(p[3],760,p[0]+9,q)});
  b.l(TL,732,693,760,693);b.l(TL,722,757,760,757);
  b.l(MR,602,898,602,930);b.v(598,926,900,'10',PN,8.4);b.v(607,887,851,'VSS');b.l(GR,602,930,602,995);b.l(MR,602,995,602,1010);b.g(602,1010);b.j(602,976);b.l(MR,588,976,602,976);b.fl(580,976);b.t(456,558,984,'PWR_FLAG');b.t(580,622,1064,'GND');
  b.t(70,111,425,'GND');b.g(140,418,90);b.l(MR,140,418,155,418);b.l(GR,155,418,336,418,336,514,408,514);
  b.v(104,567,521,'GND');b.g(140,544,90);b.l(MR,140,544,155,544);b.l(GR,183,481,155,481,155,610,183,610);b.j(155,544);
  b.l(MR,183,481,264,481);b.r(MR,197,470,252,493,'#f5f4ef');b.l(GR,264,481,294,481,294,544,406,544,406,577);
  b.l(MR,183,610,264,610);b.r(MR,197,596,252,622,'#f5f4ef');b.l(GR,264,610,264,625,364,625,364,640,408,640);
  b.v(218,541,515,'2k');b.v(246,543,515,'R5');b.v(218,683,645,'20k');b.v(246,671,645,'R6');
  b.t(310,403,603,'+5V_USB',BK);b.t(310,403,828,'+5V_USB',BK);
  b.t(125,167,745,'GND');b.g(196,737,90);b.l(MR,196,737,210,737);b.l(GR,253,688,210,688,210,784,253,784);b.j(210,737);
  b.l(MR,253,688,334,688);b.r(MR,265,677,322,703,'#f5f4ef');b.l(GR,334,688,406,688,406,706);b.l(MR,253,784,334,784);b.r(MR,265,773,322,799,'#f5f4ef');b.l(GR,334,784,406,784,406,769);
  b.t(274,315,671,'10K');b.t(321,345,671,'R1');b.t(279,315,767,'10k');b.t(321,346,762,'R2');
  b.l(GR,794,448,898,448);b.l(MR,898,448,950,448);b.l(MR,1010,448,1088,448);b.arr(1088,448,90);b.raw(979,448,'<path d="M-16 6L5 -16L16 -5L-6 16Z"/>');b.t(915,925,445,'2',PN,7);b.t(1029,1038,445,'1',PN,7);b.t(958,996,345,'FB1');b.t(877,1080,377,'FBMJ2125HM330-T');b.t(1104,1147,456,'+5V');
  b.l(GR,794,544,853,544,853,610,794,610);b.t(853,902,587,'VBAT',BK);
  b.l(GR,794,706,1243,706,1243,820);b.l(GR,794,769,1131,769,1131,805);b.l(GR,794,802,794,832,1005,832);
  b.t(1008,1230,699,'Charging_power_good',BK);b.t(1049,1132,763,'Charged',BK);b.t(895,986,828,'Charging',BK);
  [[1005,850,'470','R7','Red','LED1',1035,992],[1131,817,'470','R8','Green','LED2',1034,971],[1243,832,'470','R9','Blue','LED3',1018,967]].forEach((p,i)=>{const x=p[0],y=p[1],L=[1042,1010,1010][i];
    b.l(MR,x,y-15,x,y);b.r(MR,x-12,y,x+12,y+64);b.l(MR,x,y+64,x,y+78);b.l(GR,x,y+78,x,L-92);b.l(MR,x,L-92,x,L+96);b.led(x,L);b.ray(x+28,L-16,42);b.ray(x+28,L+16,42);
    const z=i==2?906:i?889:926;b.v(x+29,z,z-(i==2?40:37),p[2]);b.v(x+29,i==2?851:z-38,i==2?822:z-75,p[3]);
    b.v(x-38,p[6],p[7],p[4]);b.v(x+29,L+(i?105:101),L+(i?48:48),p[5]);b.v(x-3,L-74,L-86,'1',PN);b.v(x-3,L+86,L+72,'2',PN);b.v(x-6,L+204,L+98,'+5V_USB',BK)});

  const c=pen(1000,640,2.8,3,out);
  c.r(BL,337,70,1413,616);c.t(346,784,62,'Low voltage out(LGO)Voltage_regulator',BL,9);
  c.r(MR,678,184,979,343,'#ffffc2');c.t(809,848,127,'VR1');c.t(737,922,158,'LM1117MPX-3.3');
  c.t(694,724,221,'VIN',TL,7.6);c.t(899,965,221,'VOUT_2',TL,7.6);c.t(899,965,254,'VOUT_4',TL,7.6);c.t(929,965,318,'GND',TL,7.6);
  c.l(MR,620,214,678,214);c.t(644,656,211,'3',PN,7.6);[[214,'2'],[247,'4'],[310,'1']].forEach(p=>{c.l(MR,979,p[0],1040,p[0]);c.t(1003,1014,p[0]-3,p[1],PN,7.6)});
  c.l(GR,396,214,620,214);c.t(420,465,158,'+5V');c.arr(441,184);c.j(441,214);c.j(499,214);c.j(620,214);c.l(MR,396,217,396,230);c.fh(396,239);c.t(343,452,287,'PWR_FLAG');
  c.l(GR,499,214,499,235);c.l(MR,499,235,499,270);c.cap(500,280);c.l(MR,499,290,499,328);c.l(GR,499,328,620,328);c.l(GR,620,214,620,235);c.l(MR,620,235,620,265);c.pcap(621,279);c.l(MR,620,292,620,328);c.j(561,328);c.l(MR,561,328,561,343);c.g(561,343);c.t(539,583,400,'GND');
  c.t(534,562,272,'C2');c.t(524,571,310,'0.1u');c.t(631,659,266,'C3');c.t(631,672,320,'10u');
  c.l(GR,1040,214,1248,214);c.l(GR,1040,247,1130,247,1130,200);c.arr(1129,167);c.t(1097,1162,143,'+3.3V');c.j(1130,214);c.j(1174,214);c.j(1247,214);c.l(MR,1248,214,1264,214);c.fl(1271,214);c.t(1295,1404,223,'PWR_FLAG');
  c.l(GR,1040,310,1068,310,1068,392);c.l(MR,1068,392,1068,406);c.g(1069,406);c.t(1046,1090,464,'GND');c.t(1196,1240,464,'GND');
  c.l(GR,1174,214,1174,250);c.l(MR,1174,250,1174,283);c.pcap(1174,295);c.l(MR,1174,308,1174,340);c.l(GR,1174,340,1174,391,1247,391,1247,340);c.l(GR,1247,214,1247,250);c.l(MR,1247,250,1247,285);c.cap(1249,295);c.l(MR,1247,305,1247,340);c.j(1218,391);c.l(MR,1218,391,1218,406);c.g(1218,406);
  c.t(1184,1212,281,'C5');c.t(1118,1160,384,'10u');c.t(1280,1307,287,'C4');c.t(1270,1317,326,'0.1u');
  c.r(BL,449,448,794,598);c.r(BL,956,463,1360,598);
  c.note(456,[['C3: Acts as a small reservoir,',694],['smoothing out large voltage drops and',782],['low-frequency ripple.',636],['C2: Filters out high-frequency',706],['electrical noise.',590]],480,26.8,'#2020c8',7.6,'style="font-weight:400;letter-spacing:0;word-spacing:0"');
  c.note(964,[["C5: Ensures the regulator's internal operation",1348],['is stable and provides instant',1210],['current for the load.',1134],['C4: Filters any final high-frequency noise',1308],['from the output, ensuring a clean supply.',1311]],486,26.8,'#2020c8',7.6,'style="font-weight:400;letter-spacing:0;word-spacing:0"');
  c.r(BL,410,847,831,1135);c.t(413,663,831,'Battery JST Connector',BL,9);
  c.t(520,543,911,'J5');c.l(MR,499,919,576,919,590,937,590,998,576,1015,499,1015,499,919);
  c.raw(574,952,`<path stroke-width="3" d="M-4 0H4"/>`);c.raw(574,984,`<path stroke-width="4" d="M-4 0H4"/>`);
  c.l(MR,585,952,650,952);c.l(MR,585,985,650,985);c.t(615,624,949,'1',PN,7);c.t(615,625,980,'2',PN,7);c.l(GR,650,952,770,952);c.t(770,822,945,'VBAT',BK);c.l(GR,650,985,740,985,740,1035);c.l(MR,740,1035,740,1048);c.g(739,1048);c.t(718,762,1103,'GND');c.t(440,638,1046,'B2B-PH-SM4-TB');
  c.t(1139,1300,790,'ESP32-c3-02',TL,9);c.r(MR,1135,799,1405,1159,'#7cc0f6');c.t(1139,1474,1185,'File: ESP32-c3-02.kicad_sch','#725600',9);
  [[889,'USB_DN',1302,1505,1592],[952,'USB_DP',1302,1505,1592],[1081,'VBUS',1330,1518,1578]].forEach(p=>{c.t(p[2],1386,p[0]+8,p[1]);c.raw(1398,p[0],'<path stroke="#725600" d="M2 -3H0L-3 0L0 3H2Z"/>');c.l(GR,1405,p[0],p[3],p[0]);c.t(p[3],p[4],p[0]-7,p[1],BK)});

  const e=pen(1600,740,2.6133,3,out);
  e.r(BL,85,76,804,436);e.t(90,267,64,'Battery Indicator',BL,9);
  e.t(138,201,131,'+3.3V');e.arr(168,154);e.l(GR,168,187,168,235,282,235);e.l(MR,282,235,447,235);e.led(363,235,90);e.ray(347,268,135);e.ray(376,268,135);
  e.t(318,358,195,'RED');e.t(371,396,195,'D4');e.t(274,324,269,'LED4');e.t(288,301,232,'2',PN,9);e.t(428,438,232,'1',PN,9);
  e.l(GR,447,235,464,235);e.l(MR,464,235,544,235);e.r(MR,477,223,532,247,'#f5f4ef');e.t(488,525,218,'R10');e.t(485,523,278,'470');e.l(GR,544,235,670,235,670,253);e.l(MR,670,253,670,268);e.g(671,268);e.t(650,690,323,'GND');
  e.r(MR,286,646,1473,1051);[841,919,970,1006].forEach(y=>e.l(MR,286,y,1473,y));e.l(MR,505,970,505,1006);e.l(MR,1209,970,1209,1051);
  e.t(300,401,872,'Sheet: /',MR,10);e.t(300,576,906,'File: esp_32.kicad_sch',MR,10);e.t(300,588,956,'Title: Kowshik.pvt',MR,12.5,'font-style="italic" font-weight="800"');
  e.t(300,397,999,'Size: A4',MR,10);e.t(540,780,999,'Date: 2025-08-17',MR,10);e.t(1232,1428,999,'Rev: ESP_32_s3',MR,10);e.t(300,524,1035,'KiCad E.D.A. 9.0.3',MR,10);e.t(1232,1322,1035,'Id: 1/4',MR,10);
  out.push('<path d="M679 947.500H2811" stroke="#7d7d7b" fill="none"/><path d="M2747.500 153V1179" stroke="#5a5a58" fill="none"/>');
  return out.join('');
}
define('schematic-canvas',()=>`<style>:host{display:block;box-sizing:border-box;width:2134px;height:1028px;border:1px solid #9e9e9e;background:#f5f4ef;overflow:hidden}svg{display:block;font-family:"Open Sans","Noto Sans",sans-serif;font-weight:600;letter-spacing:.4px;word-spacing:1.500px}</style><svg width="2132" height="1026" viewBox="679 153 2132 1026">${drawing()}</svg>`);
define('floating-assistant',`<style>:host{position:absolute;left:2766px;top:277px;width:99px;height:99px;box-sizing:border-box;border-radius:22px;border:6.500px solid rgba(235,235,232,.6)}div{width:86px;height:86px;border-radius:17px;background:linear-gradient(200deg,rgba(40,125,235,.38),rgba(14,105,221,.43) 45%);overflow:hidden}</style><div><svg width="86" height="86"><path d="M64.700 17.500H43L24 33C17 40 22 50 30 50.500Q35 50.500 40 45Z" fill="#fff" fill-opacity=".68"/><path d="M21.300 67.500L52 38Q57 33 62 37Q67 42 62 49L44.700 68Z" fill="#fff" fill-opacity=".4"/></svg></div>`);
define('schematic-editor',`<style>:host{display:flex;flex-direction:column;width:2879px;height:1799px;position:relative;background:#f0f0f0;overflow:hidden}
.m{display:flex;height:1608px;flex:none}.l{width:602px;display:flex;flex-direction:column;border-right:8px solid #dadada;border-top:1px solid #a0a0a0;height:1542px}.s{height:8px;background:#dadada;flex:none}
.l pane-caption:first-child{height:43px}.c{width:2134px;flex:none}.left{width:68px}.right{width:67px}</style>
<title-bar></title-bar><menu-bar></menu-bar><main-toolbar></main-toolbar>
<div class="m"><div class="l"><pane-caption><ui-text w="216">Schematic Hierarchy</ui-text></pane-caption><hierarchy-tree></hierarchy-tree><div class="s"></div><pane-caption><ui-text w="158">Selection Filter</ui-text></pane-caption><selection-filter></selection-filter></div>
<side-toolbar class="left" tools="dots* dots2* in mil mm* cross* | hid | free ortho* diag | annot | tree* tools"></side-toolbar>
<div class="c"><schematic-canvas></schematic-canvas><div class="s"></div><search-pane></search-pane></div>
<side-toolbar class="right" tools="sel* hl | amp gnd wire bus entry nc junc label dir rule glab hlab sheet glabb imp | text tbox table rect circ arc"></side-toolbar></div>
<status-bar></status-bar><floating-assistant></floating-assistant>`);
</script>
</body>
</html>
